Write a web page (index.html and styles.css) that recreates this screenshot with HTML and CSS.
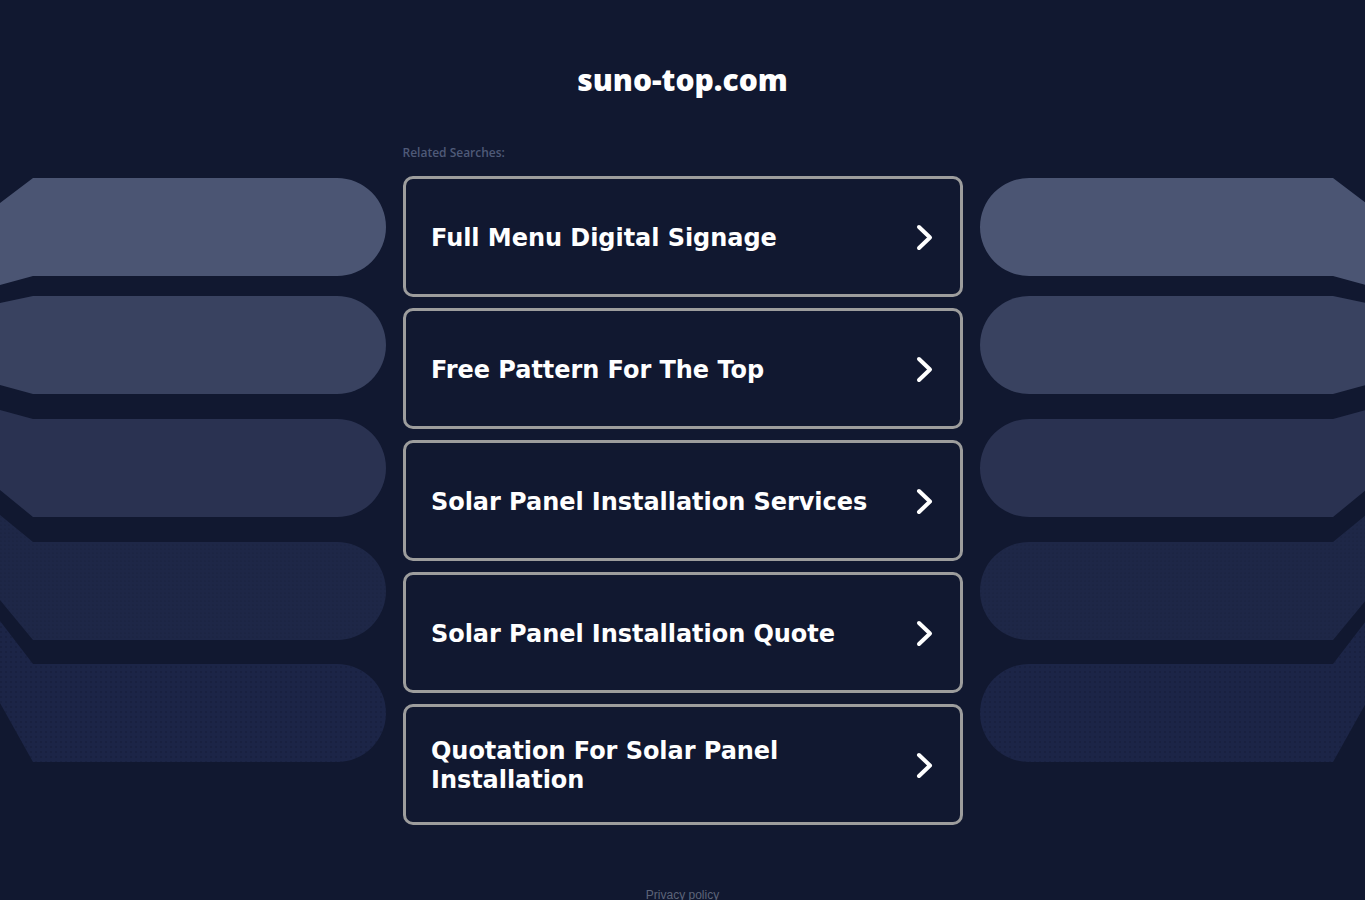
FILE: index.html
```html
<!DOCTYPE html>
<html lang="en">
<head>
    <meta charset="UTF-8">
    <meta name="viewport" content="width=device-width, initial-scale=1.0">
    <title>suno-top.com</title>
    <link rel="stylesheet" href="styles.css">
</head>
<body>
    <header class="site-head">
        <h1>suno-top.com</h1>
    </header>

    <div class="label-row">
        <p class="label">Related Searches:</p>
    </div>

    <div class="stage">
        <svg class="deco deco-left" width="386" height="590" viewBox="0 0 386 590">
            <defs>
                <pattern id="dotsL" width="4" height="4" patternUnits="userSpaceOnUse">
                    <rect width="4" height="4" fill="#1e2747"/>
                    <circle cx="1" cy="1" r="0.6" fill="#161d38"/>
                </pattern>
                <pattern id="dotsL2" width="5" height="5" patternUnits="userSpaceOnUse">
                    <rect width="5" height="5" fill="#1c2547"/>
                    <circle cx="1" cy="1" r="0.7" fill="#131a34"/>
                </pattern>
            </defs>
            <path d="M0,27 L33,2 H337 A49,49 0 0 1 337,100 H33 L0,109 Z" fill="#4b5573"/>
            <path d="M0,127 L33,120 H337 A49,49 0 0 1 337,218 H33 L0,209 Z" fill="#394260"/>
            <path d="M0,234 L33,243 H337 A49,49 0 0 1 337,341 H33 L0,314 Z" fill="#2a3251"/>
            <path d="M0,339 L33,366 H337 A49,49 0 0 1 337,464 H33 L0,424 Z" fill="url(#dotsL)"/>
            <path d="M0,445 L33,488 H337 A49,49 0 0 1 337,586 H33 L0,527 Z" fill="url(#dotsL2)"/>
        </svg>

        <ul class="links">
            <li><a href="#" class="link-card"><span>Full Menu Digital Signage</span><svg class="chev" width="18" height="27" viewBox="0 0 18 27"><path d="M3,3 L14,13.5 L3,24"/></svg></a></li>
            <li><a href="#" class="link-card"><span>Free Pattern For The Top</span><svg class="chev" width="18" height="27" viewBox="0 0 18 27"><path d="M3,3 L14,13.5 L3,24"/></svg></a></li>
            <li><a href="#" class="link-card"><span>Solar Panel Installation Services</span><svg class="chev" width="18" height="27" viewBox="0 0 18 27"><path d="M3,3 L14,13.5 L3,24"/></svg></a></li>
            <li><a href="#" class="link-card"><span>Solar Panel Installation Quote</span><svg class="chev" width="18" height="27" viewBox="0 0 18 27"><path d="M3,3 L14,13.5 L3,24"/></svg></a></li>
            <li><a href="#" class="link-card"><span>Quotation For Solar Panel Installation</span><svg class="chev" width="18" height="27" viewBox="0 0 18 27"><path d="M3,3 L14,13.5 L3,24"/></svg></a></li>
        </ul>

        <svg class="deco deco-right" width="386" height="590" viewBox="0 0 386 590">
            <defs>
                <pattern id="dotsR" width="4" height="4" patternUnits="userSpaceOnUse">
                    <rect width="4" height="4" fill="#1e2747"/>
                    <circle cx="1" cy="1" r="0.6" fill="#161d38"/>
                </pattern>
                <pattern id="dotsR2" width="5" height="5" patternUnits="userSpaceOnUse">
                    <rect width="5" height="5" fill="#1c2547"/>
                    <circle cx="1" cy="1" r="0.7" fill="#131a34"/>
                </pattern>
            </defs>
            <g transform="translate(386 0) scale(-1 1)">
                <path d="M0,27 L33,2 H337 A49,49 0 0 1 337,100 H33 L0,109 Z" fill="#4b5573"/>
                <path d="M0,127 L33,120 H337 A49,49 0 0 1 337,218 H33 L0,209 Z" fill="#394260"/>
                <path d="M0,234 L33,243 H337 A49,49 0 0 1 337,341 H33 L0,314 Z" fill="#2a3251"/>
                <path d="M0,339 L33,366 H337 A49,49 0 0 1 337,464 H33 L0,424 Z" fill="url(#dotsR)"/>
                <path d="M0,445 L33,488 H337 A49,49 0 0 1 337,586 H33 L0,527 Z" fill="url(#dotsR2)"/>
            </g>
        </svg>
    </div>

    <footer class="site-foot">
        <a href="#">Privacy policy</a>
    </footer>
</body>
</html>
```

FILE: styles.css
```css
/* Reset */
* {
    margin: 0;
    padding: 0;
    box-sizing: border-box;
}

body {
    background-color: #111830;
    color: white;
    font-family: "Open Sans", Arial, sans-serif;
    overflow-x: hidden;
}

/* Header */
.site-head {
    padding-top: 62px;
    text-align: center;
}

.site-head h1 {
    font-size: 30px;
    line-height: 36px;
    font-weight: 800;
}

/* Label */
.label-row {
    width: 560px;
    margin: 47px auto 15px;
}

.label {
    font-size: 12px;
    line-height: 16px;
    color: #4f5a78;
    font-weight: 600;
}

/* Main row */
.stage {
    display: grid;
    grid-template-columns: 1fr 560px 1fr;
    column-gap: 17px;
    align-items: start;
}

.deco {
    display: block;
}

.deco-right {
    justify-self: end;
}

/* Link cards */
.links {
    list-style: none;
    display: flex;
    flex-direction: column;
    gap: 11px;
}

.link-card {
    display: flex;
    align-items: center;
    justify-content: space-between;
    gap: 20px;
    height: 121px;
    padding: 3px 26px 0 25px;
    border: 3px solid #9d9d9d;
    border-radius: 10px;
    color: white;
    text-decoration: none;
    font-family: "DejaVu Sans", Verdana, sans-serif;
    font-weight: bold;
    font-size: 24px;
    line-height: 29px;
    letter-spacing: -0.05px;
}

.chev {
    flex-shrink: 0;
    margin-top: -2px;
}

.chev path {
    fill: none;
    stroke: white;
    stroke-width: 4;
    stroke-linecap: round;
    stroke-linejoin: round;
}

/* Footer */
.site-foot {
    margin-top: 57px;
    text-align: center;
}

.site-foot a {
    font-family: "Liberation Sans", Arial, sans-serif;
    font-size: 12px;
    color: #5d6479;
    text-decoration: none;
}
```
